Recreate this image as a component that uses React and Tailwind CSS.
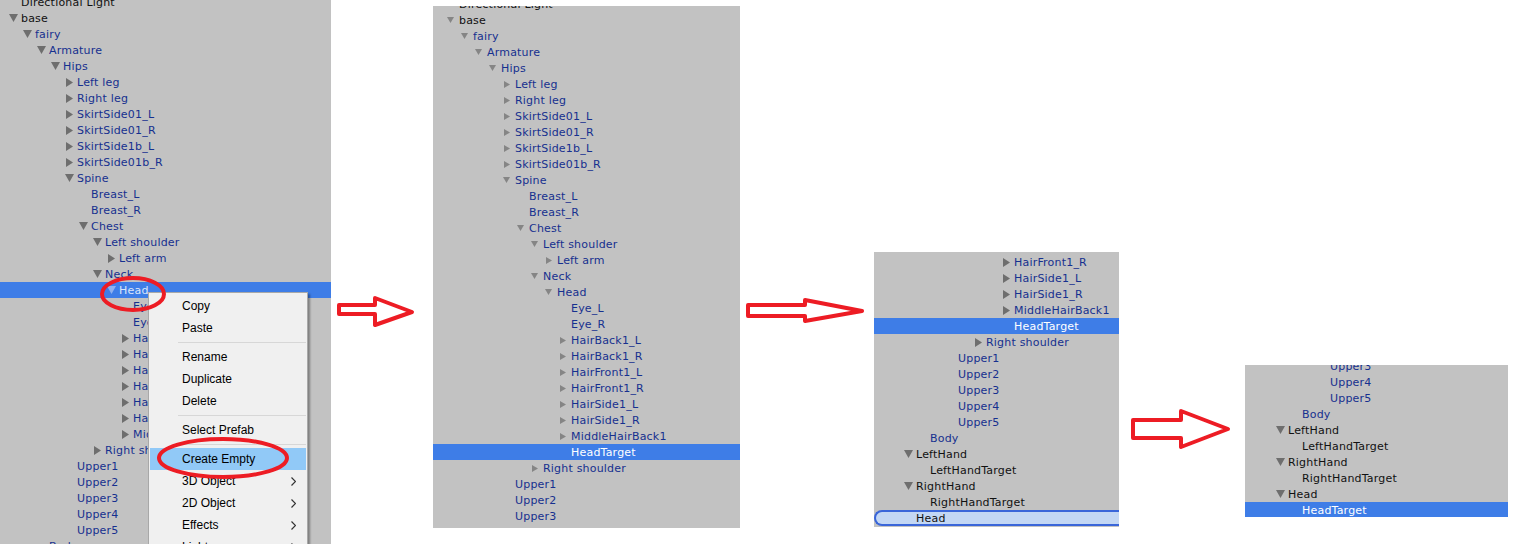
import React from 'react'

const textColor = {
  blue: 'text-[#16308f]',
  black: 'text-[#111111]',
  white: 'text-white',
  pale: 'text-[#dbe5fb]',
}

const panel1 = [
  { t: 'Directional Light', l: 0, c: 'black' },
  { t: 'base', l: 0, a: 'down', c: 'black' },
  { t: 'fairy', l: 1, a: 'down' },
  { t: 'Armature', l: 2, a: 'down' },
  { t: 'Hips', l: 3, a: 'down' },
  { t: 'Left leg', l: 4, a: 'right' },
  { t: 'Right leg', l: 4, a: 'right' },
  { t: 'SkirtSide01_L', l: 4, a: 'right' },
  { t: 'SkirtSide01_R', l: 4, a: 'right' },
  { t: 'SkirtSide1b_L', l: 4, a: 'right' },
  { t: 'SkirtSide01b_R', l: 4, a: 'right' },
  { t: 'Spine', l: 4, a: 'down' },
  { t: 'Breast_L', l: 5 },
  { t: 'Breast_R', l: 5 },
  { t: 'Chest', l: 5, a: 'down' },
  { t: 'Left shoulder', l: 6, a: 'down' },
  { t: 'Left arm', l: 7, a: 'right' },
  { t: 'Neck', l: 6, a: 'down' },
  { t: 'Head', l: 7, a: 'down', sel: true, c: 'pale' },
  { t: 'Eye_L', l: 8 },
  { t: 'Eye_R', l: 8 },
  { t: 'HairBack1_L', l: 8, a: 'right' },
  { t: 'HairBack1_R', l: 8, a: 'right' },
  { t: 'HairFront1_L', l: 8, a: 'right' },
  { t: 'HairFront1_R', l: 8, a: 'right' },
  { t: 'HairSide1_L', l: 8, a: 'right' },
  { t: 'HairSide1_R', l: 8, a: 'right' },
  { t: 'MiddleHairBack1', l: 8, a: 'right' },
  { t: 'Right shoulder', l: 6, a: 'right' },
  { t: 'Upper1', l: 4 },
  { t: 'Upper2', l: 4 },
  { t: 'Upper3', l: 4 },
  { t: 'Upper4', l: 4 },
  { t: 'Upper5', l: 4 },
  { t: 'Body', l: 2 },
]

const panel2 = [
  ...panel1.slice(0, 18),
  { t: 'Head', l: 7, a: 'down' },
  ...panel1.slice(19, 28),
  { t: 'HeadTarget', l: 8, sel: true, c: 'white' },
  { t: 'Right shoulder', l: 6, a: 'right' },
  { t: 'Upper1', l: 4 },
  { t: 'Upper2', l: 4 },
  { t: 'Upper3', l: 4 },
  { t: 'Upper4', l: 4 },
]

const panel3 = [
  { t: 'HairFront1_R', l: 8, a: 'right' },
  { t: 'HairSide1_L', l: 8, a: 'right' },
  { t: 'HairSide1_R', l: 8, a: 'right' },
  { t: 'MiddleHairBack1', l: 8, a: 'right' },
  { t: 'HeadTarget', l: 8, sel: true, c: 'white' },
  { t: 'Right shoulder', l: 6, a: 'right' },
  { t: 'Upper1', l: 4 },
  { t: 'Upper2', l: 4 },
  { t: 'Upper3', l: 4 },
  { t: 'Upper4', l: 4 },
  { t: 'Upper5', l: 4 },
  { t: 'Body', l: 2 },
  { t: 'LeftHand', l: 1, a: 'down', c: 'black' },
  { t: 'LeftHandTarget', l: 2, c: 'black' },
  { t: 'RightHand', l: 1, a: 'down', c: 'black' },
  { t: 'RightHandTarget', l: 2, c: 'black' },
  { t: 'Head', l: 1, c: 'black', edit: true },
]

const panel4 = [
  { t: 'Upper3', l: 4 },
  { t: 'Upper4', l: 4 },
  { t: 'Upper5', l: 4 },
  { t: 'Body', l: 2 },
  { t: 'LeftHand', l: 1, a: 'down', c: 'black' },
  { t: 'LeftHandTarget', l: 2, c: 'black' },
  { t: 'RightHand', l: 1, a: 'down', c: 'black' },
  { t: 'RightHandTarget', l: 2, c: 'black' },
  { t: 'Head', l: 1, a: 'down', c: 'black' },
  { t: 'HeadTarget', l: 2, sel: true, c: 'white' },
]

const menuItems = [
  { t: 'Copy' },
  { t: 'Paste' },
  { sep: true },
  { t: 'Rename' },
  { t: 'Duplicate' },
  { t: 'Delete' },
  { sep: true },
  { t: 'Select Prefab' },
  { sep: true },
  { t: 'Create Empty', hl: true },
  { t: '3D Object', sub: true },
  { t: '2D Object', sub: true },
  { t: 'Effects', sub: true },
  { t: 'Light', sub: true },
]

const Tri = ({ dir, small, sel }) => {
  const fill = sel ? '#8fb0ee' : small ? '#858585' : '#6e6e6e'
  if (dir === 'down') {
    return small ? (
      <svg width="7" height="6" viewBox="0 0 7 6"><path d="M0 0H7L3.5 6Z" fill={fill} /></svg>
    ) : (
      <svg width="9" height="8" viewBox="0 0 9 8"><path d="M0 0H9L4.5 8Z" fill={fill} /></svg>
    )
  }
  return small ? (
    <svg width="6" height="7" viewBox="0 0 6 7"><path d="M0 0L6 3.5L0 7Z" fill={fill} /></svg>
  ) : (
    <svg width="7" height="9" viewBox="0 0 7 9"><path d="M0 0L7 4.5L0 9Z" fill={fill} /></svg>
  )
}

const TreeRow = ({ row, pad, small }) => (
  <div className={`relative flex h-4 items-center ${row.sel ? 'bg-[#3e7de7]' : ''}`}>
    {row.edit && (
      <div className="absolute inset-0 rounded-l-lg border-2 border-r-0 border-[#3a66d9] bg-[#c3d7f4]" />
    )}
    <div className="shrink-0" style={{ width: pad + row.l * 14 }} />
    <div className={`relative flex h-4 w-[14px] shrink-0 items-center ${row.a === 'right' ? 'pl-[3px]' : 'pl-[2px]'}`}>
      {row.a && <Tri dir={row.a} small={small} sel={row.sel} />}
    </div>
    <span className={`relative mt-[2px] whitespace-nowrap text-[11px] leading-4 tracking-[0.2px] ${textColor[row.c || 'blue']}`}>
      {row.t}
    </span>
  </div>
)

const Arrow = ({ w, h, points, className }) => (
  <svg width={w} height={h} viewBox={`0 0 ${w} ${h}`} className={`shrink-0 ${className}`}>
    <polygon points={points} fill="none" stroke="#ed1c24" strokeWidth="4" strokeLinejoin="round" />
  </svg>
)

const ContextMenu = () => (
  <div className="absolute left-[148px] top-[292px] w-[160px] border border-[#a8a8a8] bg-[#f0f0f0] py-[2px] font-['Liberation_Sans',sans-serif] text-[12px] text-black shadow-[2px_2px_2px_rgba(0,0,0,0.35)]">
    {menuItems.map((m, i) =>
      m.sep ? (
        <div key={i} className="flex h-[7px] items-center pl-[29px] pr-[1px]">
          <div className="h-px w-full bg-[#d7d7d7]" />
        </div>
      ) : (
        <div key={i} className={`mx-[1px] flex h-[22px] items-center justify-between pl-[32px] pr-[10px] ${m.hl ? 'bg-[#91c9f7]' : ''}`}>
          <span>{m.t}</span>
          {m.sub && (
            <svg width="5" height="9" viewBox="0 0 5 9"><path d="M0.5 0.5L4.5 4.5L0.5 8.5" fill="none" stroke="#333" strokeWidth="1.2" /></svg>
          )}
        </div>
      )
    )}
  </div>
)

export default function App() {
  return (
    <div className="flex h-[544px] w-[1516px] items-start overflow-hidden bg-white font-['DejaVu_Sans',sans-serif]">
      {/* first shot: context menu on Head */}
      <div className="relative h-[544px] w-[331px] shrink-0 overflow-hidden bg-[#c2c2c2]">
        <div className="-mt-[6px]">
          {panel1.map((r, i) => <TreeRow key={i} row={r} pad={7} />)}
        </div>
        <ContextMenu />
        <svg className="pointer-events-none absolute left-0 top-0" width="331" height="544">
          <ellipse cx="133" cy="294" rx="31" ry="16" fill="none" stroke="#ed1c24" strokeWidth="4" />
          <ellipse cx="223" cy="458" rx="64" ry="19" fill="none" stroke="#ed1c24" strokeWidth="4" />
        </svg>
      </div>

      <Arrow className="ml-[4px] mt-[292px]" w={84} h={38} points="4,13 40,13 40,6 77,20 40,33 40,22 4,22" />

      {/* second shot: HeadTarget created */}
      <div className="ml-[14px] mt-[6px] h-[522px] w-[307px] shrink-0 overflow-hidden bg-[#c2c2c2]">
        <div className="-mt-[10px]">
          {panel2.map((r, i) => <TreeRow key={i} row={r} pad={12} small />)}
        </div>
      </div>

      <Arrow className="ml-[4px] mt-[296px]" w={124} h={30} points="4,9 61,9 61,4 118,15 61,25 61,20 4,20" />

      {/* third shot: renaming */}
      <div className="ml-[6px] mt-[252px] h-[275px] w-[245px] shrink-0 overflow-hidden bg-[#c2c2c2]">
        <div className="mt-[2px]">
          {panel3.map((r, i) => <TreeRow key={i} row={r} pad={14} />)}
        </div>
      </div>

      <Arrow className="ml-[10px] mt-[407px]" w={104} h={45} points="4,13 52,13 52,4 99,22 52,40 52,31 4,31" />

      {/* fourth shot: HeadTarget moved under Head */}
      <div className="ml-[12px] mt-[365px] h-[152px] w-[263px] shrink-0 overflow-hidden bg-[#c2c2c2]">
        <div className="-mt-[7px]">
          {panel4.map((r, i) => <TreeRow key={i} row={r} pad={15} />)}
        </div>
      </div>
    </div>
  )
}
